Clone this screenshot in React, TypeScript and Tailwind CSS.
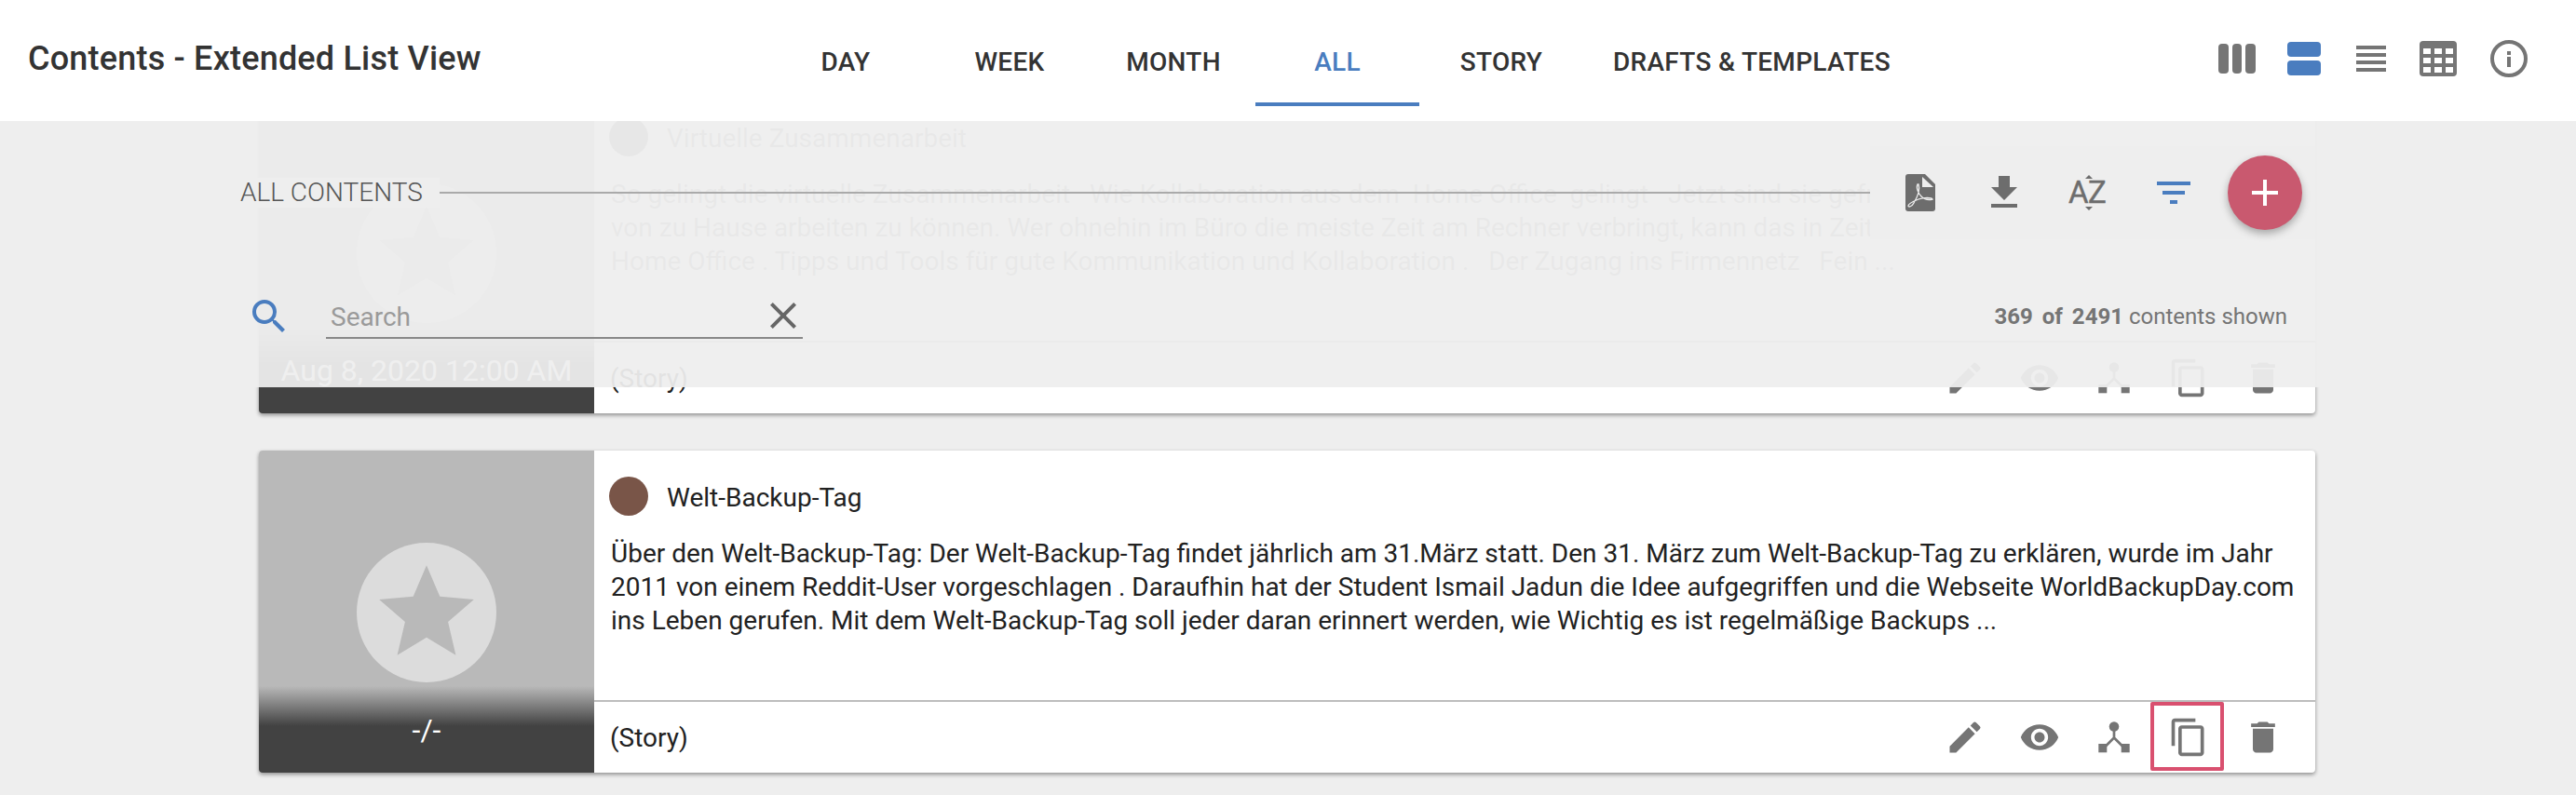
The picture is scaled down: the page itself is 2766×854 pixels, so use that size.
import React from "react";

const P = ({ d, size = 44, className = "fill-[#757575]" }: { d: string; size?: number; className?: string }) => (
  <svg width={size} height={size} viewBox="0 0 24 24" className={`${className} shrink-0`}>
    <path d={d} />
  </svg>
);

const icons = {
  edit: "M3 17.25V21h3.75L17.81 9.94l-3.75-3.75L3 17.25zM20.71 7.04a1 1 0 0 0 0-1.41l-2.34-2.34a1 1 0 0 0-1.41 0l-1.83 1.83 3.75 3.75 1.83-1.83z",
  eye: "M12 4.5C7 4.5 2.73 7.61 1 12c1.73 4.39 6 7.5 11 7.5s9.27-3.11 11-7.5c-1.73-4.39-6-7.5-11-7.5zM12 17c-2.76 0-5-2.24-5-5s2.24-5 5-5 5 2.24 5 5-2.24 5-5 5zm0-8c-1.66 0-3 1.34-3 3s1.34 3 3 3 3-1.34 3-3-1.34-3-3-3z",
  copy: "M16 1H4c-1.1 0-2 .9-2 2v14h2V3h12V1zm3 4H8c-1.1 0-2 .9-2 2v14c0 1.1.9 2 2 2h11c1.1 0 2-.9 2-2V7c0-1.1-.9-2-2-2zm0 16H8V7h11v14z",
  trash: "M6 19c0 1.1.9 2 2 2h8c1.1 0 2-.9 2-2V7H6v12zM19 4h-3.5l-1-1h-5l-1 1H5v2h14V4z",
  star: "M12 17.27L18.18 21l-1.64-7.03L22 9.24l-7.19-.61L12 2 9.19 8.63 2 9.24l5.46 4.73L5.82 21z",
  search: "M15.5 14h-.79l-.28-.27A6.47 6.47 0 0 0 16 9.5 6.5 6.5 0 1 0 9.5 16c1.61 0 3.09-.59 4.23-1.57l.27.28v.79l5 4.99L20.49 19l-4.99-5zm-6 0C7.01 14 5 11.99 5 9.5S7.01 5 9.5 5 14 7.01 14 9.5 11.99 14 9.5 14z",
  close: "M19 6.41L17.59 5 12 10.59 6.41 5 5 6.41 10.59 12 5 17.59 6.41 19 12 13.41 17.59 19 19 17.59 13.41 12z",
  download: "M19 9h-4V3H9v6H5l7 7 7-7zM5 18v2h14v-2H5z",
  filter: "M10 18h4v-2h-4v2zM3 6v2h18V6H3zm3 7h12v-2H6v2z",
};

const Fork = () => (
  <svg width="44" height="44" viewBox="0 0 44 44" className="shrink-0">
    <circle cx="22" cy="10.5" r="5.3" fill="#757575" />
    <rect x="5.3" y="29" width="9" height="9.3" fill="#757575" />
    <rect x="29.7" y="29" width="9" height="9.3" fill="#757575" />
    <path d="M22 14V22.5L13 31.5M22 22.5L31 31.5" stroke="#757575" strokeWidth="2.7" fill="none" />
  </svg>
);

const Btn = ({ children, marked }: { children: React.ReactNode; marked?: boolean }) => (
  <div
    className={
      marked
        ? "w-[79px] h-[74px] -ml-[1px] mr-[2px] pl-[3px] pt-[2px] self-start flex items-center justify-center border-4 border-[#d9506f] rounded-[2px]"
        : "w-[80px] h-[76px] flex items-center justify-center"
    }
  >
    {children}
  </div>
);

const Card = ({
  title,
  color,
  date,
  lines,
  marked,
  faded,
}: {
  title: string;
  color: string;
  date: string;
  lines: string[];
  marked?: boolean;
  faded?: boolean;
}) => (
  <div className="flex h-[346px] shrink-0 bg-white rounded-[4px] overflow-hidden shadow-[0_2px_4px_rgba(0,0,0,0.4)]">
    <div className="w-[360px] shrink-0 bg-[#b9b9b9] flex flex-col items-center pt-[99px]">
      <div className="w-[150px] h-[150px] rounded-full bg-[#dcdcdc] flex items-center justify-center">
        <P d={icons.star} size={122} className="fill-[#b9b9b9]" />
      </div>
      <div className="mt-[4px] flex-1 w-full flex items-center justify-center text-[32px] text-white bg-[linear-gradient(to_bottom,#b9b9b9_0%,#424242_46%,#424242_100%)]">
        {date}
      </div>
    </div>
    <div className="flex-1 min-w-0 flex flex-col text-[#212121]">
      <div className={`flex-1 border-b-2 border-[#bdbdbd] ${faded ? "text-[#8a8a8a]" : ""}`}>
        <div className="flex items-start gap-[20px] pt-[28px] pl-[16px]">
          <div className="w-[42px] h-[42px] rounded-full" style={{ backgroundColor: color }} />
          <span className="text-[28px] leading-[42px] pt-[2px]">{title}</span>
        </div>
        <div className="mt-[21px] pl-[18px] text-[28px] leading-[36px] whitespace-pre">
          {lines.map((l) => (
            <div key={l}>{l}</div>
          ))}
        </div>
      </div>
      <div className="h-[76px] flex items-center pl-[17px] pr-[16px]">
        <span className="text-[28px] mr-auto pt-[2px]">(Story)</span>
        <Btn><P d={icons.edit} /></Btn>
        <Btn><P d={icons.eye} /></Btn>
        <Btn><Fork /></Btn>
        <Btn marked={marked}><P d={icons.copy} /></Btn>
        <Btn><P d={icons.trash} /></Btn>
      </div>
    </div>
  </div>
);

const tabs = ["DAY", "WEEK", "MONTH", "ALL", "STORY", "DRAFTS & TEMPLATES"];

const Pdf = () => (
  <svg width="32" height="40" viewBox="0 0 32 40" className="shrink-0">
    <path d="M3 0H21L32 11V37a3 3 0 0 1-3 3H3a3 3 0 0 1-3-3V3a3 3 0 0 1 3-3Z" fill="#6d6d6d" />
    <path d="M18 3V14H30Z" fill="#eeeeee" />
    <path
      d="M13 11C11 15 14 21 17 24C20 27 25 28 29 27C28 25 20 25 14 27C9 29 3 32 3 34C3 36 7 35 9 31C12 26 16 17 14 11Z"
      stroke="#eeeeee"
      strokeWidth="1.3"
      fill="none"
    />
  </svg>
);

const AZ = () => (
  <svg width="44" height="40" viewBox="0 0 44 40" className="shrink-0">
    <text x="0" y="31" fontFamily="Roboto" fontSize="33" fill="#6d6d6d" stroke="#6d6d6d" strokeWidth="0.4" letterSpacing="-0.5">AZ</text>
    <path d="M18 5L22 1L26 5Z M18 35L22 39L26 35Z" fill="#6d6d6d" />
  </svg>
);

export default function App() {
  return (
    <div className="relative h-[854px] overflow-hidden bg-[#eeeeee] font-['Roboto',sans-serif]">
      <header className="relative z-20 h-[130px] bg-white flex items-start">
        <div className="w-[820px] shrink-0 pl-[30px] pt-[42px] text-[36px] leading-[42px] tracking-[0.2px] font-medium text-[#333333]">
          Contents - Extended List View
        </div>
        <nav className="flex h-[114px]">
          {tabs.map((t) => (
            <div
              key={t}
              className={`min-w-[176px] px-[32px] pt-[24px] flex items-center justify-center text-[28px] tracking-[0.3px] font-medium border-b-4 ${
                t === "ALL" ? "text-[#4a7dbf] border-[#4a7dbf]" : "text-[#333333] border-transparent"
              }`}
            >
              {t}
            </div>
          ))}
        </nav>
        <div className="ml-auto pr-[36px] h-full flex items-center -mt-[2px]">
          <div className="w-[72px] flex justify-center">
            <div className="flex gap-[4px] h-[32px]">
              <div className="w-[10.6px] bg-[#757575] rounded-[4px]" />
              <div className="w-[10.6px] bg-[#757575] rounded-[4px]" />
              <div className="w-[10.6px] bg-[#757575] rounded-[4px]" />
            </div>
          </div>
          <div className="w-[72px] flex justify-center">
            <div className="flex flex-col gap-[4px] w-[36px]">
              <div className="h-[16px] bg-[#4a7dbf] rounded-[4px]" />
              <div className="h-[16px] bg-[#4a7dbf] rounded-[4px]" />
            </div>
          </div>
          <div className="w-[72px] flex justify-center">
            <div className="flex flex-col gap-[4px] w-[32px]">
              <div className="h-[4px] bg-[#757575]" />
              <div className="h-[4px] bg-[#757575]" />
              <div className="h-[4px] bg-[#757575]" />
              <div className="h-[4px] bg-[#757575]" />
            </div>
          </div>
          <div className="w-[72px] flex justify-center">
            <div className="w-[40px] h-[38px] bg-[#757575] rounded-[4px] grid grid-cols-3 gap-[4px] p-[4px] pt-[8px]">
              {Array.from({ length: 9 }).map((_, i) => (
                <div key={i} className="bg-white" />
              ))}
            </div>
          </div>
          <div className="w-[72px] ml-[4px] flex justify-center">
            <div className="w-[40px] h-[40px] rounded-full border-4 border-[#757575] flex flex-col items-center justify-center gap-[2px]">
              <div className="w-[4px] h-[4px] bg-[#757575]" />
              <div className="w-[4px] h-[11px] bg-[#757575]" />
            </div>
          </div>
        </div>
      </header>

      <main className="-mt-[32px] pl-[278px] pr-[280px] flex flex-col gap-[40px]">
        <Card
          faded
          title="Virtuelle Zusammenarbeit"
          color="#7f7f7f"
          date="Aug 8, 2020 12:00 AM"
          lines={[
            "So gelingt die virtuelle Zusammenarbeit   Wie Kollaboration aus dem  Home Office  gelingt   Jetzt sind sie gefragt, um",
            "von zu Hause arbeiten zu können. Wer ohnehin im Büro die meiste Zeit am Rechner verbringt, kann das in Zeiten",
            "Home Office . Tipps und Tools für gute Kommunikation und Kollaboration .   Der Zugang ins Firmennetz   Fein ...",
          ]}
        />
        <Card
          title="Welt-Backup-Tag"
          color="#795548"
          date="-/-"
          marked
          lines={[
            "Über den Welt-Backup-Tag: Der Welt-Backup-Tag findet jährlich am 31.März statt. Den 31. März zum Welt-Backup-Tag zu erklären, wurde im Jahr",
            "2011 von einem Reddit-User vorgeschlagen . Daraufhin hat der Student Ismail Jadun die Idee aufgegriffen und die Webseite WorldBackupDay.com",
            "ins Leben gerufen. Mit dem Welt-Backup-Tag soll jeder daran erinnert werden, wie Wichtig es ist regelmäßige Backups ...",
          ]}
        />
      </main>

      <section className="absolute z-10 top-[130px] left-0 right-0 h-[286px] bg-[#eeeeee]/94 pl-[250px] pr-[280px] pt-[27px]">
        <div className="flex items-center h-[100px]">
          <div className="bg-[#eeeeee] pl-[8px] pr-[18px] text-[28px] leading-[32px] font-light text-[#555555] whitespace-nowrap">ALL CONTENTS</div>
          <div className="flex-1 h-[2px] bg-[#aaaaaa]" />
          <div className="w-[478px] h-[100px] bg-[#eeeeee] flex items-center pl-[9px]">
            <div className="w-[90px] flex justify-center"><Pdf /></div>
            <div className="w-[90px] flex justify-center"><P d={icons.download} size={48} className="fill-[#6d6d6d]" /></div>
            <div className="w-[92px] flex justify-center"><AZ /></div>
            <div className="w-[90px] flex justify-center"><P d={icons.filter} size={48} className="fill-[#4a7dbf]" /></div>
            <button className="ml-[13px] w-[80px] h-[80px] rounded-full bg-[#c9596f] flex items-center justify-center shadow-[0_4px_8px_rgba(0,0,0,0.3)]">
              <svg width="28" height="28" viewBox="0 0 28 28"><path d="M12 0h4v12h12v4H16v12h-4V16H0v-4h12z" fill="#fff" /></svg>
            </button>
          </div>
        </div>
        <div className="mt-[59px] flex items-center pl-[15px]">
          <P d={icons.search} size={48} className="fill-[#4a7dbf]" />
          <div className="ml-[37px] w-[512px] h-[48px] border-b-2 border-[#888888] flex items-center pl-[5px]">
            <span className="text-[28px] text-[#9a9a9a] mr-auto pt-[3px]">Search</span>
            <P d={icons.close} size={48} className="fill-[#666666] -mr-[3px]" />
          </div>
          <div className="ml-auto mr-[30px] text-[24px] text-[#757575]">
            <b className="font-bold">369</b>
            <b className="font-bold ml-[10px]">of</b>
            <b className="font-bold ml-[10px]">2491</b> contents shown
          </div>
        </div>
      </section>
    </div>
  );
}
